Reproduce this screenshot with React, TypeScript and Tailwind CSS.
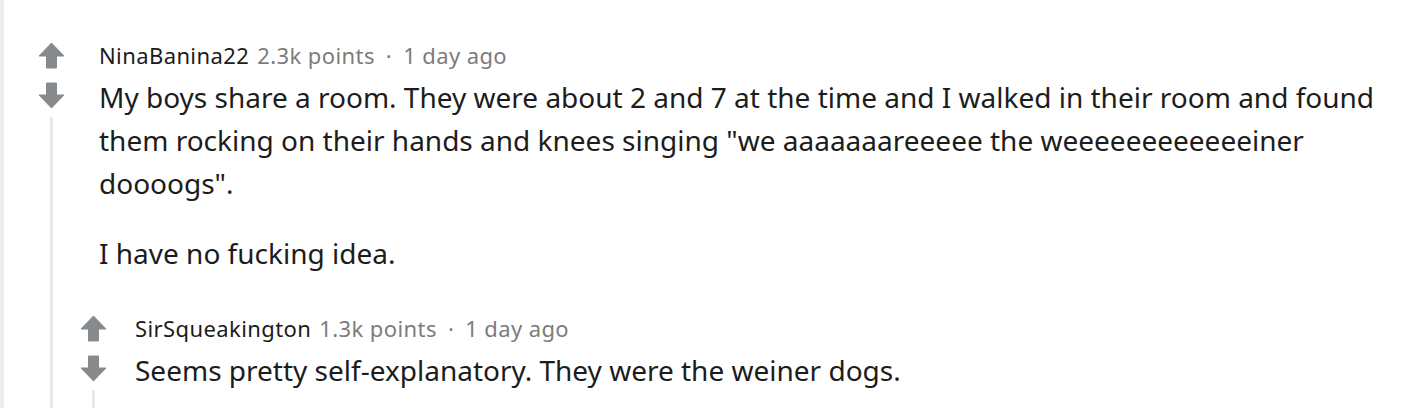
import React from 'react';

const META_FONT = { fontFamily: '"Noto Sans", "Open Sans", sans-serif' };
const BODY_FONT = { fontFamily: '"Noto Sans", "Open Sans", sans-serif' };

function Arrow({ down }: { down?: boolean }) {
  return (
    <svg width="27" height="27" viewBox="0 0 27 27" className={down ? 'rotate-180' : ''}>
      <path d="M13.5 1 L26 14 L18.5 14 L18.5 26 L8.5 26 L8.5 14 L1 14 Z" fill="#878a8c" stroke="#878a8c" strokeWidth="1" strokeLinejoin="round" />
    </svg>
  );
}

function Thread({ children }: { children: React.ReactNode }) {
  return (
    <div className="flex">
      <div className="flex w-[27px] shrink-0 flex-col items-center">
        <div className="mt-[1px]"><Arrow /></div>
        <div className="mt-[13px]"><Arrow down /></div>
        <div className="mt-[8px] w-[3px] flex-1 bg-[#e9e9e9]" />
      </div>
      <div className="flex min-w-0 flex-1 flex-col">{children}</div>
    </div>
  );
}

function Meta({ author, points, age }: { author: string; points: string; age: string }) {
  return (
    <div className="text-[22px] leading-[28px] tracking-[0.4px] text-[#1c1c1c]" style={META_FONT}>
      {author} <span className="ml-[2px] text-[#7c7c7c]">{points} points<span className="mx-[11px]">·</span>{age}</span>
    </div>
  );
}

export default function App() {
  return (
    <div className="h-[408px] w-[1406px] overflow-hidden border-l-4 border-[#ededed] bg-white">
      <div className="pl-[34px] pt-[41px]">
        <Thread>
          <div className="pl-[34px] pr-[12px]">
            <Meta author="NinaBanina22" points="2.3k" age="1 day ago" />
            <div className="mt-[7px] text-[28px] leading-[43px] text-[#1c1c1c]" style={BODY_FONT}>
              <p>My boys share a room. They were about 2 and 7 at the time and I walked in their room and found them rocking on their hands and knees singing "we aaaaaaareeeee the weeeeeeeeeeeeiner doooogs".</p>
              <p className="mt-[27px]">I have no fucking idea.</p>
            </div>
          </div>
          <div className="pl-[15px] pt-[39px]">
            <Thread>
              <div className="pl-[28px]">
                <Meta author="SirSqueakington" points="1.3k" age="1 day ago" />
                <div className="mt-[7px] text-[28px] leading-[43px] text-[#1c1c1c]" style={BODY_FONT}>
                  <p>Seems pretty self-explanatory. They were the weiner dogs.</p>
                </div>
                <div className="h-[40px]" />
              </div>
            </Thread>
          </div>
        </Thread>
      </div>
    </div>
  );
}
